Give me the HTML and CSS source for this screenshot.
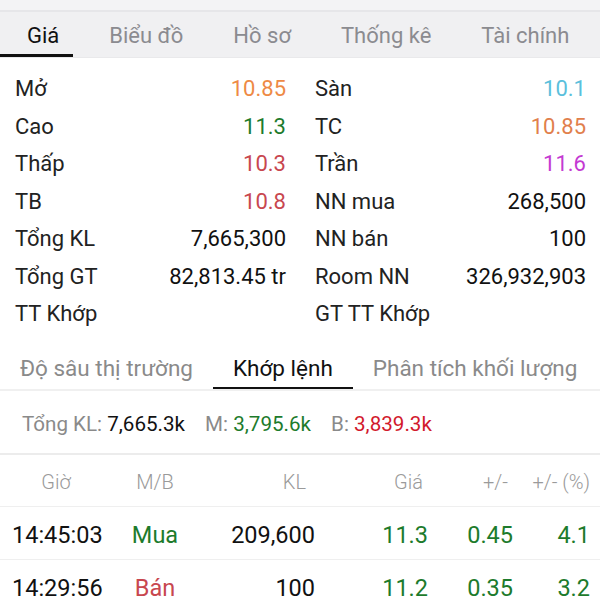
FILE: index.html
```html
<!DOCTYPE html>
<html lang="vi">

<head>
  <meta charset="UTF-8">
  <meta name="viewport" content="width=device-width, initial-scale=1.0">
  <title>Giá</title>
  <link rel="stylesheet" href="styles.css">
</head>

<body>
  <div class="topline">
    <span>Ngày giao dịch gần nhất, cập nhật phiên gần nhất của ngày hôm nay</span>
  </div>

  <div class="tabs">
    <div class="tab active">Giá</div>
    <div class="tab">Biểu đồ</div>
    <div class="tab">Hồ sơ</div>
    <div class="tab">Thống kê</div>
    <div class="tab">Tài chính</div>
  </div>

  <div class="info">
    <div class="row"><span>Mở</span><span class="orange">10.85</span></div>
    <div class="row"><span>Sàn</span><span class="cyan">10.1</span></div>
    <div class="row"><span>Cao</span><span class="green">11.3</span></div>
    <div class="row"><span>TC</span><span class="orange2">10.85</span></div>
    <div class="row"><span>Thấp</span><span class="red">10.3</span></div>
    <div class="row"><span>Trần</span><span class="purple">11.6</span></div>
    <div class="row"><span>TB</span><span class="red">10.8</span></div>
    <div class="row"><span>NN mua</span><span>268,500</span></div>
    <div class="row"><span>Tổng KL</span><span>7,665,300</span></div>
    <div class="row"><span>NN bán</span><span>100</span></div>
    <div class="row"><span>Tổng GT</span><span>82,813.45 tr</span></div>
    <div class="row"><span>Room NN</span><span>326,932,903</span></div>
    <div class="row"><span>TT Khớp</span><span></span></div>
    <div class="row"><span>GT TT Khớp</span><span></span></div>
  </div>

  <div class="subtabs">
    <div class="subtab">Độ sâu thị trường</div>
    <div class="subtab active">Khớp lệnh</div>
    <div class="subtab">Phân tích khối lượng</div>
  </div>

  <div class="summary">
    <span class="lbl">Tổng KL:</span> <span>7,665.3k</span>
    <span class="lbl gap">M:</span> <span class="green">3,795.6k</span>
    <span class="lbl gap">B:</span> <span class="red2">3,839.3k</span>
  </div>

  <div class="grid head">
    <span class="c">Giờ</span>
    <span class="c">M/B</span>
    <span class="r kl">KL</span>
    <span class="r gia">Giá</span>
    <span class="r ch">+/-</span>
    <span class="r">+/- (%)</span>
  </div>
  <div class="grid trade">
    <span>14:45:03</span>
    <span class="c green">Mua</span>
    <span class="r">209,600</span>
    <span class="r green">11.3</span>
    <span class="r green">0.45</span>
    <span class="r green">4.1</span>
  </div>
  <div class="grid trade">
    <span>14:29:56</span>
    <span class="c red">Bán</span>
    <span class="r">100</span>
    <span class="r green">11.2</span>
    <span class="r green">0.35</span>
    <span class="r green">3.2</span>
  </div>
</body>

</html>
```

FILE: styles.css
```css
body {
  margin: 0;
  background: #fff;
  font-family: Roboto, "Noto Sans", sans-serif;
  color: #1a1a1a;
  overflow: hidden;
}

.topline {
  height: 10px;
  overflow: hidden;
  background: #f3f3f5;
  border-bottom: 2px solid #e6e6e9;
  padding-left: 30px;
  font-size: 20px;
  line-height: 20px;
  color: #555;
  white-space: nowrap;
}

.topline span {
  display: block;
  margin-top: -21px;
}

.tabs {
  display: flex;
  background: #f0f0f2;
  border-bottom: 1px solid #e9e9eb;
  padding-top: 9px;
}

.tab {
  padding: 0 25px 3px;
  font-size: 22px;
  line-height: 30px;
  color: #8b8b90;
  border-bottom: 3px solid transparent;
}

.tab.active {
  padding: 0 14px 3px 27px;
  margin-right: 11px;
  color: #111;
  border-bottom-color: #111;
}

.info {
  display: grid;
  grid-template-columns: 1fr 1fr;
  column-gap: 29px;
  padding: 12px 14px 0 15px;
}

.row {
  display: flex;
  justify-content: space-between;
  height: 37.5px;
  line-height: 37.5px;
  font-size: 22px;
  color: #222;
}

.row span:last-child {
  color: #111;
}

.subtabs {
  display: flex;
  border-bottom: 2px solid #f0f0f0;
}

.subtab {
  padding: 20px 20px 4px;
  font-size: 22.5px;
  line-height: 30px;
  color: #8a8a8a;
  border-bottom: 2px solid transparent;
}

.subtab:first-child {
  padding-right: 20px;
}

.subtab.active {
  color: #111;
  border-bottom-color: #111;
}

.summary {
  padding: 18px 22px 14px;
  font-size: 20.6px;
  line-height: 30px;
  color: #111;
  border-bottom: 2px solid #ececec;
}

.summary .lbl {
  color: #8a8a8a;
}

.summary .gap {
  margin-left: 15px;
}

.grid {
  display: grid;
  grid-template-columns: 112px 86px 117px 113px 85px 77px;
  border-bottom: 1px solid #efefef;
}

.head {
  padding: 13px 0 10px;
  font-size: 20px;
  line-height: 28px;
  font-weight: 300;
  color: #9a9a9a;
}

.trade {
  padding: 13px 0 9px;
  font-size: 23.5px;
  line-height: 30px;
  color: #111;
}

.trade span:first-child {
  padding-left: 12px;
}

.c {
  text-align: center;
}

.r {
  text-align: right;
}

.head .kl {
  padding-right: 9px;
}

.head .gia {
  padding-right: 5px;
}

.head .ch {
  padding-right: 5px;
}

.orange {
  color: #ee8a45 !important;
}

.orange2 {
  color: #e1804c !important;
}

.cyan {
  color: #5bbfdc !important;
}

.green {
  color: #1d7b2c !important;
}

.red {
  color: #c8474f !important;
}

.red2 {
  color: #d2192c;
}

.purple {
  color: #c43ad2 !important;
}
```
